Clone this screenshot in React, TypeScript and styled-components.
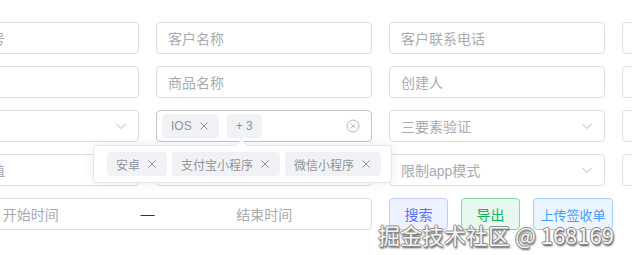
import React from 'react';
import styled, { createGlobalStyle } from 'styled-components';

const GlobalStyle = createGlobalStyle`
  html, body {
    margin: 0;
    padding: 0;
    background: #fff;
    overflow: hidden;
  }
  body {
    font-family: 'Liberation Sans', 'Noto Sans CJK SC', Arial, sans-serif;
    font-size: 14px;
    color: #606266;
  }
`;

const Page = styled.div`
  position: relative;
  width: 632px;
  height: 255px;
  overflow: hidden;
`;

const Form = styled.div`
  display: grid;
  grid-template-columns: repeat(4, 216px);
  grid-auto-rows: 32px;
  column-gap: 17px;
  row-gap: 12px;
  margin-left: -77px;
  padding-top: 22px;
`;

const Field = styled.div<{ $hover?: boolean }>`
  box-sizing: border-box;
  height: 32px;
  display: flex;
  align-items: center;
  padding: 0 11px;
  border: 1px solid ${(p) => (p.$hover ? '#c0c4cc' : '#dcdfe6')};
  border-radius: 4px;
  background: #fff;
  gap: 8px;
`;

const Placeholder = styled.span`
  flex: 1;
  color: #a8abb2;
  font-size: 14px;
  white-space: nowrap;
  overflow: hidden;
`;

const TagList = styled.div`
  flex: 1;
  display: flex;
  align-items: center;
  gap: 8px;
  margin-left: -6px;
`;

const Tag = styled.span`
  box-sizing: border-box;
  height: 24px;
  display: inline-flex;
  align-items: center;
  gap: 6px;
  padding: 0 9px;
  border-radius: 4px;
  background: #f0f2f5;
  color: #909399;
  font-size: 12px;
  white-space: nowrap;
`;

const IconBox = styled.span`
  display: inline-flex;
  align-items: center;
  justify-content: center;
  color: #b4b7bd;
`;

const RangeField = styled.div`
  grid-column: span 2;
  box-sizing: border-box;
  height: 32px;
  display: flex;
  align-items: center;
  padding: 0 15px;
  border: 1px solid #dcdfe6;
  border-radius: 4px;
`;

const RangeInput = styled.span`
  flex: 1;
  text-align: center;
  color: #a8abb2;
  font-size: 14px;
`;

const RangeSep = styled.span`
  width: 50px;
  text-align: center;
  color: #303133;
  font-size: 14px;
`;

const Actions = styled.div`
  grid-column: span 2;
  display: flex;
  align-items: center;
  gap: 13px;
`;

const tones = {
  primary: { bg: '#eef1ff', border: '#c3caff', color: '#5f70ff' },
  success: { bg: '#e7f8ee', border: '#86d7a6', color: '#16b157' },
  info: { bg: '#ecf5ff', border: '#a0cfff', color: '#409eff' },
};

const Button = styled.button<{ $tone: keyof typeof tones; $width: number }>`
  box-sizing: border-box;
  width: ${(p) => p.$width}px;
  height: 32px;
  padding: 0;
  display: inline-flex;
  align-items: center;
  justify-content: center;
  border-radius: 4px;
  border: 1px solid ${(p) => tones[p.$tone].border};
  background: ${(p) => tones[p.$tone].bg};
  color: ${(p) => tones[p.$tone].color};
  font-family: inherit;
  font-size: ${(p) => (p.$width > 70 ? 13 : 14)}px;
  white-space: nowrap;
  cursor: pointer;
`;

const Popover = styled.div`
  position: absolute;
  left: 93px;
  top: 145px;
  box-sizing: border-box;
  width: 299px;
  height: 38px;
  padding: 0 13px;
  display: flex;
  align-items: center;
  gap: 5px;
  background: #fff;
  border: 1px solid #e4e7ed;
  border-radius: 4px;
  box-shadow: 0 0 12px rgba(0, 0, 0, 0.08);

  &::before {
    content: '';
    position: absolute;
    left: 143px;
    top: -5px;
    width: 8px;
    height: 8px;
    background: #fff;
    border-top: 1px solid #e4e7ed;
    border-left: 1px solid #e4e7ed;
    transform: rotate(45deg);
  }
`;

const Watermark = styled.div`
  position: absolute;
  left: 378px;
  top: 219px;
  font-family: 'Noto Sans CJK SC', 'DejaVu Sans', sans-serif;
  font-size: 22px;
  line-height: 30px;
  white-space: nowrap;
  color: #f4f4f4;
  text-shadow:
    -1px 0 #8a8a8a,
    1px 0 #8a8a8a,
    0 -1px #8a8a8a,
    0 1px #8a8a8a,
    1px 2px 2px #444;
`;

const ChevronDown = () => (
  <IconBox>
    <svg width="12" height="12" viewBox="0 0 12 12" fill="none">
      <path d="M1.5 4 L6 8.5 L10.5 4" stroke="currentColor" strokeWidth="1" />
    </svg>
  </IconBox>
);

const CircleClose = () => (
  <IconBox>
    <svg width="14" height="14" viewBox="0 0 14 14" fill="none">
      <circle cx="7" cy="7" r="6" stroke="currentColor" strokeWidth="1" />
      <path d="M4.8 4.8 L9.2 9.2 M9.2 4.8 L4.8 9.2" stroke="currentColor" strokeWidth="1" />
    </svg>
  </IconBox>
);

const CloseX = () => (
  <svg width="12" height="12" viewBox="0 0 12 12" fill="none">
    <path d="M2.5 2.5 L9.5 9.5 M9.5 2.5 L2.5 9.5" stroke="#909399" strokeWidth="1" />
  </svg>
);

function TextField({ placeholder, select }: { placeholder: string; select?: boolean }) {
  return (
    <Field>
      <Placeholder>{placeholder}</Placeholder>
      {select && <ChevronDown />}
    </Field>
  );
}

const hiddenTags = ['安卓', '支付宝小程序', '微信小程序'];

export default function App() {
  return (
    <Page>
      <GlobalStyle />
      <Form>
        <TextField placeholder="电子订单号" />
        <TextField placeholder="客户名称" />
        <TextField placeholder="客户联系电话" />
        <TextField placeholder="订单状态" />

        <TextField placeholder="" />
        <TextField placeholder="商品名称" />
        <TextField placeholder="创建人" />
        <TextField placeholder="签收状态" />

        <TextField placeholder="" select />
        <Field $hover>
          <TagList>
            <Tag>
              IOS
              <CloseX />
            </Tag>
            <Tag>+ 3</Tag>
          </TagList>
          <CircleClose />
        </Field>
        <TextField placeholder="三要素验证" select />
        <TextField placeholder="支付方式" select />

        <TextField placeholder="订单金额值" />
        <TextField placeholder="渠道来源" select />
        <TextField placeholder="限制app模式" select />
        <TextField placeholder="商户类型" select />

        <RangeField>
          <RangeInput>开始时间</RangeInput>
          <RangeSep>—</RangeSep>
          <RangeInput>结束时间</RangeInput>
        </RangeField>
        <Actions>
          <Button $tone="primary" $width={59}>
            搜索
          </Button>
          <Button $tone="success" $width={59}>
            导出
          </Button>
          <Button $tone="info" $width={80}>
            上传签收单
          </Button>
        </Actions>
      </Form>

      <Popover>
        {hiddenTags.map((t) => (
          <Tag key={t}>
            {t}
            <CloseX />
          </Tag>
        ))}
      </Popover>

      <Watermark>掘金技术社区 @ 168169</Watermark>
    </Page>
  );
}
